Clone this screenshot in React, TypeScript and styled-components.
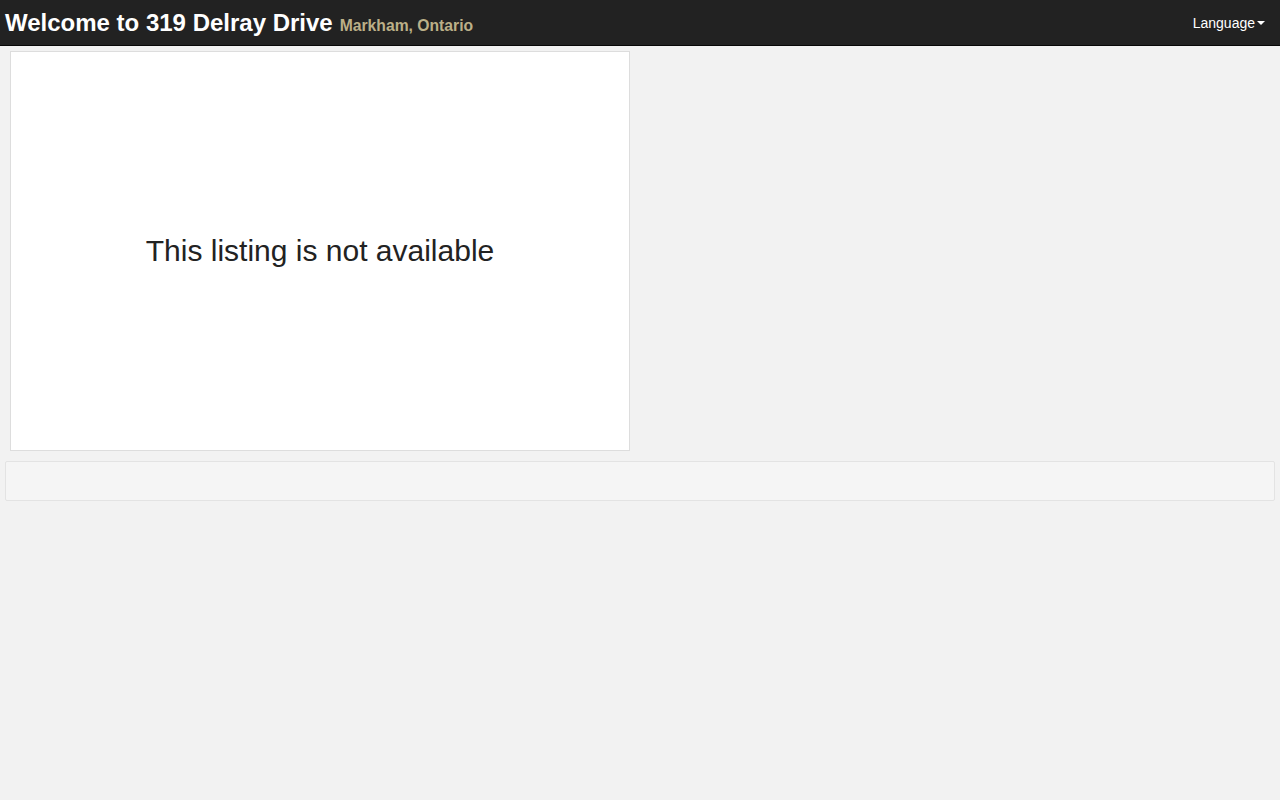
import React from 'react';
import styled, { createGlobalStyle } from 'styled-components';

const GlobalStyle = createGlobalStyle`
	html, body {
		margin: 0;
		padding: 0;
		background-color: #f2f2f2;
		font-family: "Liberation Sans", Arial, sans-serif;
		color: #222;
	}
`;

const StyledNavbar = styled.header`
	height: 46px;
	background-color: #222;
	border-bottom: 1px solid #080808;
	box-sizing: border-box;
	display: flex;
	align-items: center;
	justify-content: space-between;
	padding: 1px 15px 0 5px;
`;

const StyledBrand = styled.div`
	display: flex;
	align-items: baseline;
	gap: 7px;

	& > h1 {
		margin: 0;
		font-size: 24px;
		font-weight: bold;
		color: #fff;
	}

	& > span {
		font-size: 15.7px;
		font-weight: bold;
		color: #bcb088;
	}
`;

const StyledDropdown = styled.button`
	background: none;
	border: 0;
	padding: 0;
	color: #fff;
	font-family: inherit;
	font-size: 14px;
	display: flex;
	align-items: center;
	cursor: pointer;

	&::after {
		content: '';
		margin-left: 2px;
		border-top: 4px solid #fff;
		border-left: 4px solid transparent;
		border-right: 4px solid transparent;
	}
`;

const StyledMain = styled.main`
	padding: 5px 5px;
	display: flex;
	flex-direction: column;
	gap: 10px;
`;

const StyledCard = styled.section`
	width: 620px;
	height: 400px;
	margin-left: 5px;
	box-sizing: border-box;
	background-color: #fff;
	border: 1px solid #ddd;
	display: flex;
	align-items: center;
	justify-content: center;
	font-size: 30px;
	color: #222;
`;

const StyledWell = styled.div`
	height: 40px;
	box-sizing: border-box;
	background-color: #f5f5f5;
	border: 1px solid #e3e3e3;
	border-radius: 2px;
`;

const App: React.FC = () => {
	return (
		<>
			<GlobalStyle />
			<StyledNavbar>
				<StyledBrand>
					<h1>Welcome to 319 Delray Drive</h1>
					<span>Markham, Ontario</span>
				</StyledBrand>
				<StyledDropdown type="button">Language</StyledDropdown>
			</StyledNavbar>
			<StyledMain>
				<StyledCard>This listing is not available</StyledCard>
				<StyledWell />
			</StyledMain>
		</>
	);
};

export default App;
